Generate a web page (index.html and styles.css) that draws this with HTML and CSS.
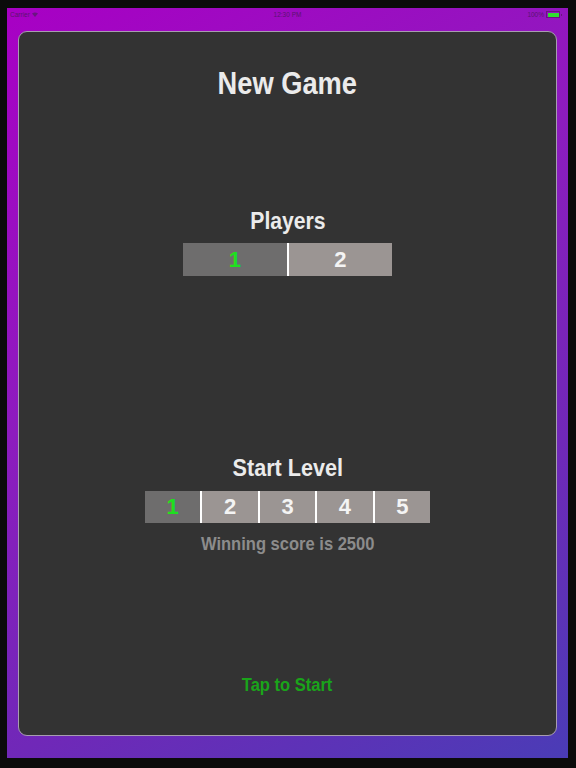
FILE: index.html
```html
<!DOCTYPE html>
<html>
<head>
<meta charset="utf-8">
<link rel="stylesheet" href="styles.css">
</head>
<body>
<div class="frame">
  <div class="status">
    <span class="carrier">Carrier <svg class="wifi" width="6" height="5" viewBox="0 0 6 5"><path d="M0 1.6 Q3 -0.6 6 1.6 L3 5 Z" fill="#6a1580"/></svg></span>
    <span class="time">12:30 PM</span>
    <span class="batt">100% <span class="battery"><span class="fill"></span></span><span class="tip"></span></span>
  </div>
  <div class="card">
    <h1 class="title"><span class="sq">New Game</span></h1>
    <div class="label players-label"><span class="sq">Players</span></div>
    <div class="seg seg-players">
      <div class="opt sel">1</div>
      <div class="opt">2</div>
    </div>
    <div class="label level-label"><span class="sq">Start Level</span></div>
    <div class="seg seg-level">
      <div class="opt sel">1</div>
      <div class="opt">2</div>
      <div class="opt">3</div>
      <div class="opt">4</div>
      <div class="opt">5</div>
    </div>
    <div class="score"><span class="sq narrow">Winning score is 2500</span></div>
    <div class="start"><span class="sq narrow">Tap to Start</span></div>
  </div>
</div>
</body>
</html>
```
FILE: styles.css
```css
html, body {
  margin: 0;
  padding: 0;
  background: #0b0b0b;
  width: 576px;
  height: 768px;
  overflow: hidden;
  font-family: "Liberation Sans", Arial, sans-serif;
}
.frame {
  margin: 8px 8px 0 7px;
  height: 750px;
  background: linear-gradient(150deg, #a800c4 0%, #8d1cbe 40%, #7028b8 70%, #4a3cb6 100%);
  display: flex;
  flex-direction: column;
}
.status {
  height: 23px;
  display: flex;
  align-items: flex-start;
  justify-content: space-between;
  padding: 3px 6px 0 3px;
  box-sizing: border-box;
  font-size: 6.5px;
  color: #5a1470;
  position: relative;
}
.carrier { display: flex; align-items: center; gap: 2px; }
.time {
  position: absolute;
  left: 0;
  right: 0;
  top: 3px;
  text-align: center;
}
.batt { display: flex; align-items: center; gap: 2px; }
.battery {
  width: 11px;
  height: 4px;
  border: 0.6px solid #6a1580;
  padding: 0.5px;
  display: inline-block;
}
.battery .fill { display: block; width: 100%; height: 100%; background: #30e030; }
.tip { width: 1px; height: 2px; background: #6a1580; margin-left: -1px; }
.card {
  margin: 0 11px;
  height: 705px;
  box-sizing: border-box;
  background: #333333;
  border: 1px solid #a89cb0;
  border-radius: 9px;
  display: flex;
  flex-direction: column;
  align-items: center;
}
.sq {
  display: inline-block;
  transform: scaleX(0.92);
  white-space: nowrap;
}
.sq.narrow { transform: scaleX(0.87); }
.title {
  margin: 34px 0 0;
  font-size: 31px;
  line-height: 36px;
  color: #ebebeb;
  font-weight: bold;
}
.title .sq { transform: scaleX(0.88); }
.label {
  font-size: 23px;
  line-height: 28px;
  font-weight: bold;
  color: #ebebeb;
}
.players-label { margin-top: 105px; }
.level-label { margin-top: 178px; }
.level-label .sq { transform: scaleX(0.94); }
.seg {
  display: flex;
  gap: 2px;
  background: #ffffff;
}
.seg-players { margin-top: 8px; width: 209px; height: 33px; }
.seg-level { margin-top: 9px; width: 285px; height: 32px; }
.opt {
  flex: 1;
  background: #9b9593;
  color: #f4f4f4;
  font-weight: bold;
  font-size: 22px;
  display: flex;
  align-items: center;
  justify-content: center;
}
.opt.sel {
  background: #6e6d6d;
  color: #1ee01e;
}
.score {
  margin-top: 9px;
  font-size: 19px;
  line-height: 24px;
  font-weight: bold;
  color: #8c8c8c;
}
.start {
  margin-top: 117px;
  font-size: 19px;
  line-height: 24px;
  font-weight: bold;
  color: #1aa41a;
}
```
